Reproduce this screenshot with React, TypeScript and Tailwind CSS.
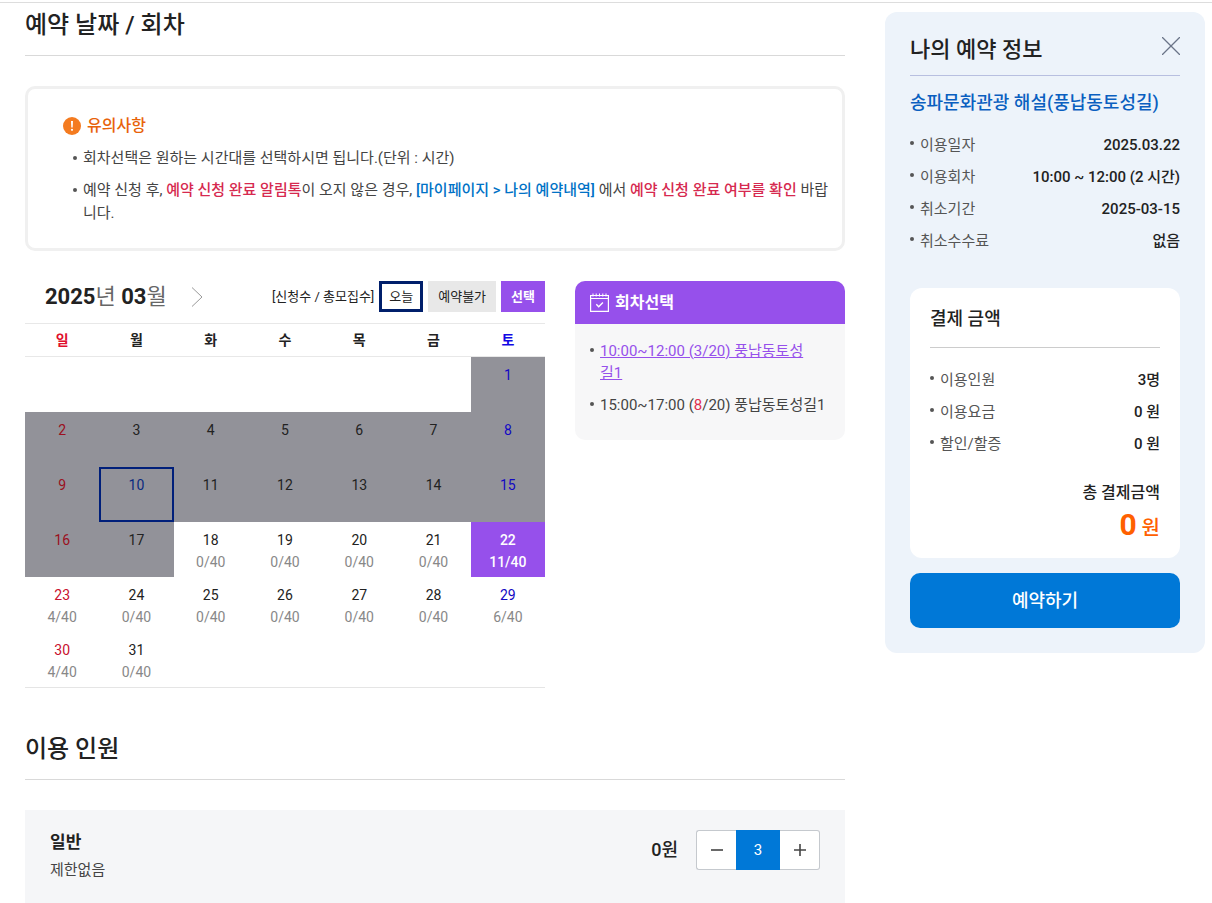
import { useState } from "react";
import { clsx } from "clsx";

const weekdays = ["일", "월", "화", "수", "목", "금", "토"];

// applicants per open day, out of 40
const applied: Record<number, number> = {
  18: 0,
  19: 0,
  20: 0,
  21: 0,
  22: 11,
  23: 4,
  24: 0,
  25: 0,
  26: 0,
  27: 0,
  28: 0,
  29: 6,
  30: 4,
  31: 0,
};

const TODAY = 10;
const CAPACITY = 40;

// March 2025 starts on a Saturday
const weeks = Array.from({ length: 6 }, (_, w) =>
  Array.from({ length: 7 }, (_, d) => {
    const day = w * 7 + d - 5;
    return day >= 1 && day <= 31 ? day : null;
  }),
);

const bookingInfo = [
  { label: "이용일자", value: "2025.03.22" },
  { label: "이용회차", value: "10:00 ~ 12:00 (2 시간)" },
  { label: "취소기간", value: "2025-03-15" },
  { label: "취소수수료", value: "없음" },
];

function Bullet({ className }: { className?: string }) {
  return <span aria-hidden className={clsx("size-1 shrink-0 rounded-full bg-[#555]", className)} />;
}

function SectionTitle({ children }: { children: React.ReactNode }) {
  return (
    <h2 className="border-b border-[#d9d9d9] pb-3 text-2xl leading-9 font-medium text-[#222]">
      {children}
    </h2>
  );
}

function Notice() {
  return (
    <div className="mt-[30px] rounded-[10px] border-3 border-[#f0f0f0] pt-[25px] pr-1 pb-[23px] pl-[35px]">
      <p className="flex items-center gap-1.5 text-base leading-6 font-medium text-[#e8630a]">
        <svg viewBox="0 0 18 18" className="size-[18px]" aria-hidden>
          <circle cx="9" cy="9" r="9" fill="#f47b20" />
          <path d="M8 4h2l-.3 6.4H8.3z" fill="#fff" />
          <circle cx="9" cy="12.8" r="1.1" fill="#fff" />
        </svg>
        유의사항
      </p>
      <ul className="mt-[9px] space-y-[9px] pl-2.5 text-[15px] leading-[23px] text-[#444]">
        <li className="flex gap-1.5">
          <Bullet className="mt-[9px]" />
          <p>회차선택은 원하는 시간대를 선택하시면 됩니다.(단위 : 시간)</p>
        </li>
        <li className="flex gap-1.5">
          <Bullet className="mt-[9px]" />
          <p>
            예약 신청 후, <strong className="font-medium text-[#d6294f]">예약 신청 완료 알림톡</strong>이
            오지 않은 경우,{" "}
            <strong className="font-medium text-[#0072c6]">[마이페이지 &gt; 나의 예약내역]</strong> 에서{" "}
            <strong className="font-medium text-[#d6294f]">예약 신청 완료 여부를 확인</strong> 바랍니다.
          </p>
        </li>
      </ul>
    </div>
  );
}

function DayCell({
  day,
  weekday,
  selected,
  onSelect,
}: {
  day: number | null;
  weekday: number;
  selected: boolean;
  onSelect: (day: number) => void;
}) {
  if (day === null) return <td className="h-[55px]" />;

  const open = day in applied;
  const today = day === TODAY;

  return (
    <td className="h-[55px] p-0">
      <button
        type="button"
        disabled={!open}
        onClick={() => onSelect(day)}
        className={clsx(
          "flex h-full w-full flex-col items-center text-sm leading-[22px]",
          today ? "border-2 border-[#001f7a] pt-[5px]" : "pt-[7px]",
          !open && "bg-[#929299]",
          selected && "bg-[#9650eb] font-medium text-white",
          !selected && today && "text-[#0a2a80]",
          !selected && !today && weekday === 0 && (open ? "text-[#c8102e]" : "text-[#9b1020]"),
          !selected && !today && weekday === 6 && "text-[#1208c4]",
          !selected && !today && weekday > 0 && weekday < 6 && "text-[#222]",
        )}
      >
        <span>{day}</span>
        {open && (
          <span className={selected ? "text-white" : "text-[#888]"}>
            {applied[day]}/{CAPACITY}
          </span>
        )}
      </button>
    </td>
  );
}

function Calendar() {
  const [selectedDay, setSelectedDay] = useState(22);

  return (
    <div className="min-w-0 flex-1">
      <div className="flex h-[31px] items-center justify-between pl-5">
        <div className="flex items-center gap-6">
          <p className="text-[22px] leading-8 font-bold text-[#222]">
            2025<span className="font-normal text-[#666]">년</span> 03
            <span className="font-normal text-[#666]">월</span>
          </p>
          <button type="button" aria-label="다음 달">
            <svg viewBox="0 0 12 20" className="h-5 w-3" fill="none" stroke="#999" aria-hidden>
              <path d="M1 .5 11 10 1 19.5" />
            </svg>
          </button>
        </div>
        <div className="flex items-center gap-[5px] text-[13px] text-[#222]">
          <span>[신청수 / 총모집수]</span>
          <span className="flex h-[31px] items-center border-3 border-[#001f6b] px-[7px]">오늘</span>
          <span className="flex h-[31px] items-center bg-[#e8e8e8] px-2.5">예약불가</span>
          <span className="flex h-[31px] items-center bg-[#9650eb] px-2.5 font-bold text-white">
            선택
          </span>
        </div>
      </div>

      <table className="mt-[11px] w-full table-fixed border-separate border-spacing-0 border-b border-[#e5e5e5]">
        <thead>
          <tr>
            {weekdays.map((name, i) => (
              <th
                key={name}
                scope="col"
                className={clsx(
                  "h-[34px] border-y border-[#e8e8e8] p-0 text-sm font-bold",
                  i === 0 && "text-[#e0102e]",
                  i === 6 && "text-[#1208e4]",
                  i > 0 && i < 6 && "text-[#222]",
                )}
              >
                {name}
              </th>
            ))}
          </tr>
        </thead>
        <tbody>
          {weeks.map((week, w) => (
            <tr key={w}>
              {week.map((day, d) => (
                <DayCell
                  key={d}
                  day={day}
                  weekday={d}
                  selected={day === selectedDay}
                  onSelect={setSelectedDay}
                />
              ))}
            </tr>
          ))}
        </tbody>
      </table>
    </div>
  );
}

function SessionPicker() {
  return (
    <div className="w-[270px] shrink-0 self-start overflow-hidden rounded-[10px] bg-[#f7f7f8]">
      <h3 className="flex h-[43px] items-center gap-1.5 bg-[#9650eb] px-[15px] text-base font-bold text-white">
        <svg viewBox="0 0 19 19" className="size-[19px]" fill="none" stroke="#fff" aria-hidden>
          <path d="M.6 2.5h17.800v15.900H.6z" strokeWidth="1.200" />
          <path d="M.5 5.500h18" />
          <path d="M3 .5v3M6.200 .5v3M9.500 .5v3M12.800 .5v3M16 .5v3" />
          <path d="m6.300 11.300 2.400 2.400 4.200-4.200" strokeWidth="1.400" />
        </svg>
        회차선택
      </h3>
      <ul className="space-y-2.5 px-[15px] pt-4 pb-6 text-[15px] leading-[22px] text-[#444]">
        <li className="flex gap-1.5">
          <Bullet className="mt-2" />
          <a href="#session-1" className="max-w-[205px] break-all text-[#9650eb] underline">
            10:00~12:00 (3/20) 풍납동토성길1
          </a>
        </li>
        <li className="flex gap-1.5">
          <Bullet className="mt-2" />
          <a href="#session-2" className="whitespace-nowrap">
            15:00~17:00 (<span className="text-[#e0304f]">8</span>/20) 풍납동토성길1
          </a>
        </li>
      </ul>
    </div>
  );
}

function InfoList({ items }: { items: { label: string; value: string }[] }) {
  return (
    <dl className="text-[15px] leading-8">
      {items.map(({ label, value }) => (
        <div key={label} className="flex items-center justify-between">
          <dt className="flex gap-1.5 text-[#555]">
            <Bullet className="mt-3" />
            {label}
          </dt>
          <dd className="font-medium text-[#222]">{value}</dd>
        </div>
      ))}
    </dl>
  );
}

function BookingSummary({ count }: { count: number }) {
  return (
    <aside className="w-[320px] shrink-0 self-start rounded-xl bg-[#edf3fa] p-[25px] pt-5">
      <div className="flex items-start justify-between border-b border-[#b8bfe0] pb-[7px]">
        <h2 className="text-[22px] leading-9 font-medium text-[#222]">나의 예약 정보</h2>
        <button type="button" aria-label="닫기" className="mt-[5px]">
          <svg
            viewBox="0 0 18 18"
            className="size-[18px]"
            fill="none"
            stroke="#6b7488"
            strokeWidth="1.3"
            aria-hidden
          >
            <path d="m0 0 18 18M18 0 0 18" />
          </svg>
        </button>
      </div>
      <h3 className="mt-[13px] mb-3 text-lg leading-7 font-medium whitespace-nowrap text-[#0a5fc0]">
        송파문화관광 해설(풍납동토성길)
      </h3>
      <InfoList items={bookingInfo} />

      <div className="mt-[31px] rounded-xl bg-white px-5 pt-4 pb-3">
        <h3 className="border-b border-[#ccc] pb-[13px] text-lg leading-[30px] font-medium text-[#222]">
          결제 금액
        </h3>
        <div className="mt-4">
          <InfoList
            items={[
              { label: "이용인원", value: `${count}명` },
              { label: "이용요금", value: "0 원" },
              { label: "할인/할증", value: "0 원" },
            ]}
          />
        </div>
        <div className="mt-[21px] text-right font-medium">
          <p className="text-base leading-6 text-[#222]">총 결제금액</p>
          <p className="mt-0.5 text-xl leading-9 text-[#ff6000]">
            <strong className="text-[30px] font-bold">0</strong> 원
          </p>
        </div>
      </div>

      <button
        type="button"
        className="mt-[15px] h-[55px] w-full rounded-[10px] bg-[#0078d7] text-lg font-medium text-white"
      >
        예약하기
      </button>
    </aside>
  );
}

export default function App() {
  const [count, setCount] = useState(3);

  return (
    <div className="mt-0.5 border-t border-[#ddd] bg-white font-['Roboto','Noto_Sans_CJK_KR',sans-serif]">
      <div className="flex gap-10 pt-[9px] pr-[7px] pl-[25px]">
        <main className="-mt-[5px] min-w-0 flex-1">
          <SectionTitle>예약 날짜 / 회차</SectionTitle>
          <Notice />
          <div className="mt-[30px] mb-[43px] flex gap-[30px]">
            <Calendar />
            <SessionPicker />
          </div>

          <SectionTitle>이용 인원</SectionTitle>
          <div className="mt-[30px] flex items-start justify-between bg-[#f5f6f8] px-[25px] pt-5 pb-[21px]">
            <div className="text-[#222]">
              <label htmlFor="general-count" className="block text-[17px] leading-6 font-bold">
                일반
              </label>
              <p className="mt-1 text-[15px] leading-6 text-[#444]">제한없음</p>
            </div>
            <div className="flex items-center gap-[18px]">
              <span className="text-lg font-medium text-[#222]">0원</span>
              <div className="flex h-10">
                <button
                  type="button"
                  aria-label="인원 줄이기"
                  onClick={() => setCount(Math.max(0, count - 1))}
                  className="flex w-10 items-center justify-center rounded-l-[3px] border border-r-0 border-[#c5c9ce] bg-white"
                >
                  <svg viewBox="0 0 12 12" className="size-3" stroke="#444" strokeWidth="1.6" aria-hidden>
                    <path d="M0 6h12" />
                  </svg>
                </button>
                <input
                  id="general-count"
                  value={count}
                  onChange={(e) => setCount(Number(e.target.value) || 0)}
                  className="w-11 bg-[#0078d7] text-center text-[15px] text-white"
                />
                <button
                  type="button"
                  aria-label="인원 늘리기"
                  onClick={() => setCount(count + 1)}
                  className="flex w-10 items-center justify-center rounded-r-[3px] border border-l-0 border-[#c5c9ce] bg-white"
                >
                  <svg viewBox="0 0 12 12" className="size-3" stroke="#444" strokeWidth="1.6" aria-hidden>
                    <path d="M0 6h12M6 0v12" />
                  </svg>
                </button>
              </div>
            </div>
          </div>
        </main>
        <BookingSummary count={count} />
      </div>
    </div>
  );
}
